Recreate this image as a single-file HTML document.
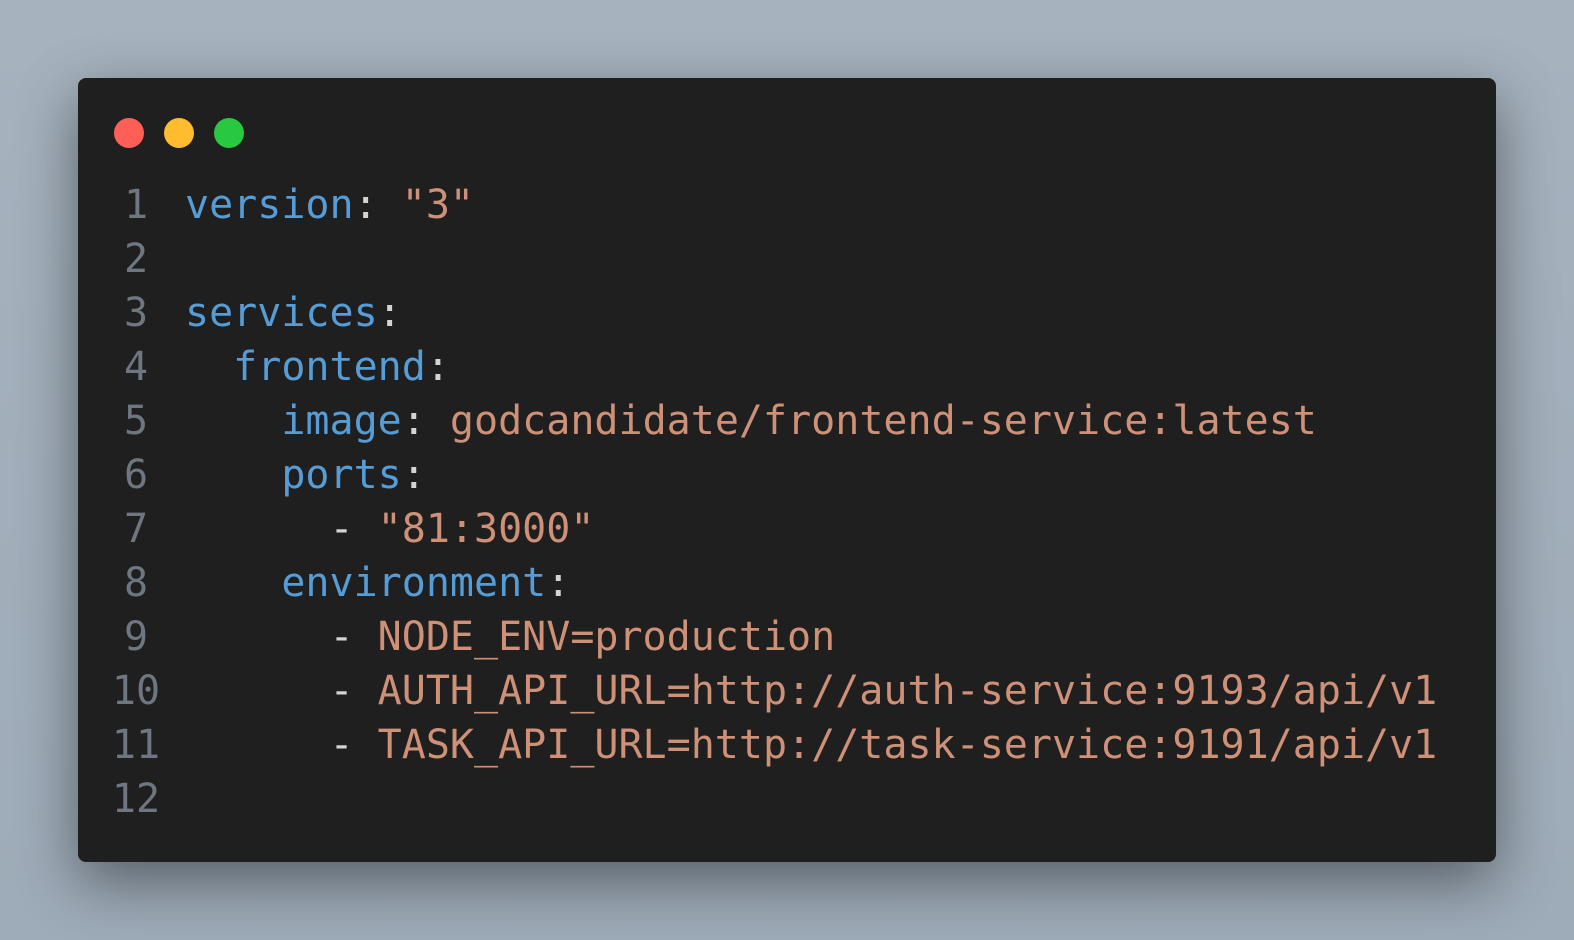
<!DOCTYPE html>
<html><head><style>
html,body{margin:0;padding:0;width:1574px;height:940px;overflow:hidden;background:linear-gradient(#a6b2be,#9eabb8);}
.win{position:absolute;left:78px;top:78px;width:1418px;height:784px;background:#1f1f1f;border-radius:8px;box-shadow:0 20px 60px rgba(0,0,0,0.45);}
.dot{position:absolute;top:40px;width:30px;height:30px;border-radius:50%;}
pre{position:absolute;left:0;top:100px;margin:0;font-family:"DejaVu Sans Mono","Liberation Mono",monospace;font-size:40px;line-height:54px;color:#d4d4d4;}
.n{display:inline-block;width:72px;margin-left:22px;text-align:center;color:#6e7681;margin-right:13px;}
.k{color:#569cd6}.s{color:#ce9178}
</style></head><body>
<div class="win">
<div class="dot" style="left:36px;background:#ff5f57"></div>
<div class="dot" style="left:86px;background:#febc2e"></div>
<div class="dot" style="left:136px;background:#28c840"></div>
<pre><span class="n">1</span><span class="k">version</span>: <span class="s">"3"</span>
<span class="n">2</span>
<span class="n">3</span><span class="k">services</span>:
<span class="n">4</span>  <span class="k">frontend</span>:
<span class="n">5</span>    <span class="k">image</span>: <span class="s">godcandidate/frontend-service:latest</span>
<span class="n">6</span>    <span class="k">ports</span>:
<span class="n">7</span>      - <span class="s">"81:3000"</span>
<span class="n">8</span>    <span class="k">environment</span>:
<span class="n">9</span>      - <span class="s">NODE_ENV=production</span>
<span class="n">10</span>      - <span class="s">AUTH_API_URL=http://auth-service:9193/api/v1</span>
<span class="n">11</span>      - <span class="s">TASK_API_URL=http://task-service:9191/api/v1</span>
<span class="n">12</span></pre>
</div>
</body></html>
